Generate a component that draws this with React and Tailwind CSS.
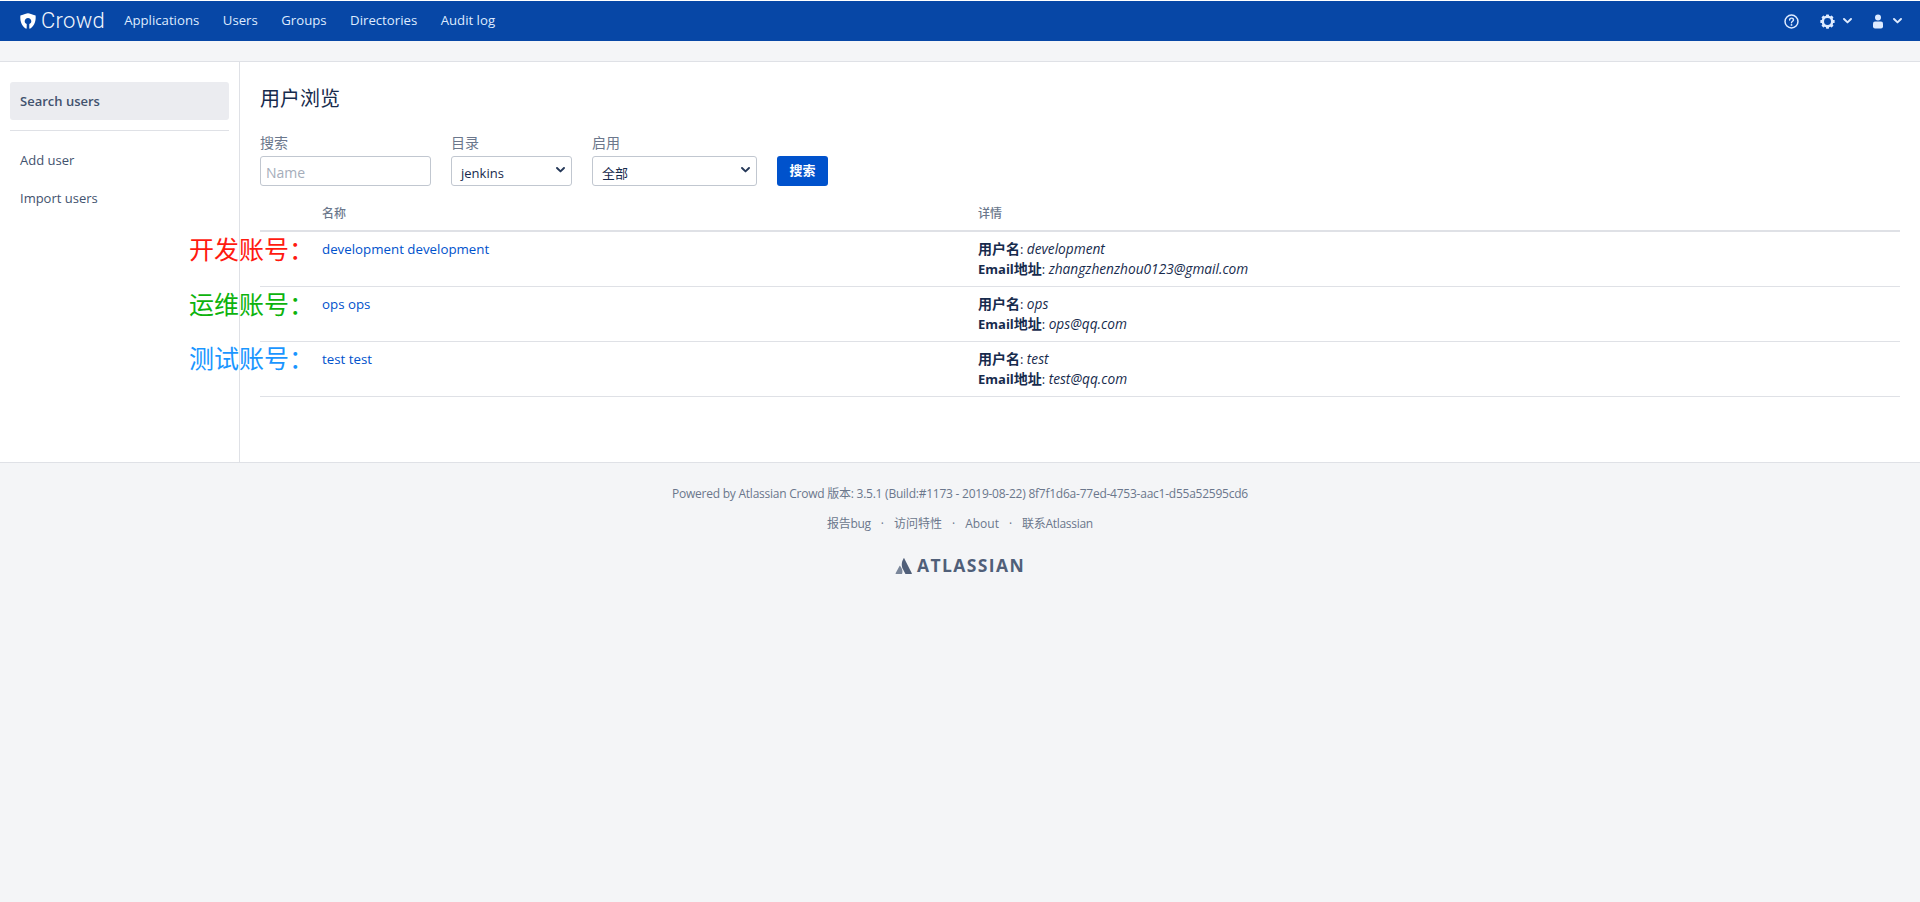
import React from "react";

function Shield() {
  return (
    <svg width="18" height="18" viewBox="0 0 18 18" className="shrink-0">
      <path fillRule="evenodd" fill="#fff" d="M9 1.2 C7.6 1.2 5 2.6 1.4 3.6 C0.9 8 2 13.4 6.6 16.6 C7.4 17 7.7 16.6 7.7 16 L7.7 12 C6.5 11.6 5.7 10.4 5.7 9.2 C5.7 7.4 7.2 6 9 6 C10.8 6 12.3 7.4 12.3 9.2 C12.3 10.4 11.5 11.6 10.3 12 L10.3 16 C10.3 16.6 10.6 17 11.4 16.6 C16 13.4 17.1 8 16.6 3.6 C13 2.6 10.4 1.2 9 1.2 Z" />
    </svg>
  );
}

function Chevron({ className = "" }) {
  return (
    <svg width="9" height="6" viewBox="0 0 9 6" className={className}>
      <path d="M1 1 L4.5 4.4 L8 1" fill="none" stroke="currentColor" strokeWidth="1.9" strokeLinecap="round" strokeLinejoin="round" />
    </svg>
  );
}

function Help() {
  return (
    <svg width="15" height="15" viewBox="0 0 16 16" className="text-[#deebff]">
      <circle cx="8" cy="8" r="6.9" fill="none" stroke="currentColor" strokeWidth="1.6" />
      <path d="M6 6.4 C6 5.2 6.9 4.4 8 4.4 C9.2 4.4 10.1 5.2 10.1 6.3 C10.1 7.7 8 7.7 8 9.3" fill="none" stroke="currentColor" strokeWidth="1.5" strokeLinecap="round" />
      <circle cx="8" cy="11.6" r="1" fill="currentColor" />
    </svg>
  );
}

function Gear() {
  return (
    <svg width="15" height="15" viewBox="0 0 16 16" className="text-[#deebff]">
      <circle cx="8" cy="8" r="5" fill="none" stroke="currentColor" strokeWidth="2.6" />
      <g fill="currentColor">
        <rect x="6.4" y="0.4" width="3.2" height="2.4" rx="0.6" />
        <rect x="6.4" y="13.2" width="3.2" height="2.4" rx="0.6" />
        <rect x="0.4" y="6.4" width="2.4" height="3.2" rx="0.6" />
        <rect x="13.2" y="6.4" width="2.4" height="3.2" rx="0.6" />
        <rect x="6.4" y="0.4" width="3.2" height="2.4" rx="0.6" transform="rotate(45 8 8)" />
        <rect x="6.4" y="13.2" width="3.2" height="2.4" rx="0.6" transform="rotate(45 8 8)" />
        <rect x="0.4" y="6.4" width="2.4" height="3.2" rx="0.6" transform="rotate(45 8 8)" />
        <rect x="13.2" y="6.4" width="2.4" height="3.2" rx="0.6" transform="rotate(45 8 8)" />
      </g>
    </svg>
  );
}

function Person() {
  return (
    <svg width="10" height="15" viewBox="0 0 10 15" className="text-[#deebff]">
      <circle cx="5" cy="3.4" r="3" fill="currentColor" />
      <rect x="0" y="7.4" width="10" height="7.2" rx="2" fill="currentColor" />
    </svg>
  );
}

function Select({ value, width }) {
  return (
    <div className={`${width} h-[30px] border border-[#c1c7d0] rounded-[3px] bg-white relative flex items-center pl-[9px] pt-[5px] text-[13px] text-[#172b4d]`}>
      {value}
      <Chevron className="absolute right-[6px] top-[10px] text-[#253858]" />
    </div>
  );
}

const users = [
  { name: "development development", user: "development", email: "zhangzhenzhou0123@gmail.com" },
  { name: "ops ops", user: "ops", email: "ops@qq.com" },
  { name: "test test", user: "test", email: "test@qq.com" },
];

const notes = [
  { text: "开发账号：", color: "text-[#ff1a10]", top: "top-[232px]" },
  { text: "运维账号：", color: "text-[#0db30d]", top: "top-[287px]" },
  { text: "测试账号：", color: "text-[#1a96ff]", top: "top-[341px]" },
];

export default function App() {
  return (
    <div className="relative min-h-[902px] bg-[#f4f5f7] font-['Open_Sans','Noto_Sans_CJK_SC',sans-serif] text-[13px] text-[#172b4d]">
      <div className="h-px bg-white" />
      <header className="h-10 bg-[#0747a6] flex items-center text-white">
        <div className="flex items-center pl-[19px]">
          <Shield />
          <span className="ml-[4px] text-[22px] font-['Roboto',sans-serif] font-light tracking-[0.3px] leading-none text-[#f2f6fc]">Crowd</span>
        </div>
        <nav className="flex items-center ml-[19px] gap-[23.5px] text-[13.2px] text-[#deebff]">
          <span>Applications</span>
          <span>Users</span>
          <span>Groups</span>
          <span>Directories</span>
          <span>Audit log</span>
        </nav>
        <div className="ml-auto flex items-center pr-[18px]">
          <Help />
          <div className="ml-[21px] flex items-center gap-[8px] text-[#deebff]">
            <Gear />
            <Chevron />
          </div>
          <div className="ml-[21px] flex items-center gap-[10px] text-[#deebff]">
            <Person />
            <Chevron />
          </div>
        </div>
      </header>
      <div className="h-5" />
      <main className="flex h-[402px] bg-white border-y border-[#dfe1e6]">
        <aside className="w-[240px] shrink-0 border-r border-[#dfe1e6] px-[10px] pt-5">
          <div className="h-[38px] rounded-[3px] bg-[#ebecf0] flex items-center px-[10px] pt-[2px] font-semibold text-[#42526e]">Search users</div>
          <div className="h-px bg-[#dfe1e6] mt-[10px]" />
          <div className="h-[38px] mt-[10px] flex items-center px-[10px] pt-[2px] text-[#42526e]">Add user</div>
          <div className="h-[38px] flex items-center px-[10px] pt-[2px] text-[#42526e]">Import users</div>
        </aside>
        <section className="flex-1 pl-5 pr-5 pt-[19px]">
          <h1 className="text-[20px] leading-[36px] font-normal text-[#172b4d]">用户浏览</h1>
          <div className="flex items-end mt-[16px]">
            <div className="w-[171px]">
              <div className="text-[14px] leading-[20px] text-[#6b778c] mb-[3px]">搜索</div>
              <div className="h-[30px] border border-[#c1c7d0] rounded-[3px] flex items-center pl-[5px] pt-[2px] text-[#a5adba] text-[14px]">Name</div>
            </div>
            <div className="ml-5">
              <div className="text-[14px] leading-[20px] text-[#6b778c] mb-[3px]">目录</div>
              <Select value="jenkins" width="w-[121px]" />
            </div>
            <div className="ml-5">
              <div className="text-[14px] leading-[20px] text-[#6b778c] mb-[3px]">启用</div>
              <Select value="全部" width="w-[165px]" />
            </div>
            <div className="ml-5 h-[30px] w-[51px] rounded-[3px] bg-[#0052cc] text-white font-bold flex items-center justify-center">搜索</div>
          </div>
          <div className="mt-[16px] grid grid-cols-[718px_1fr] h-[30px] border-b-2 border-[#dfe1e6] text-[12px] font-medium text-[#6b778c] leading-[24px]">
            <div className="pl-[62px]">名称</div>
            <div>详情</div>
          </div>
          {users.map((u) => (
            <div key={u.user} className="grid grid-cols-[718px_1fr] h-[55px] border-b border-[#dfe1e6] pt-[7px] leading-[20px]">
              <div className="pl-[62px] text-[#0052cc] text-[13.3px]">{u.name}</div>
              <div>
                <div><strong className="font-bold text-[14px]">用户名</strong>: <em className="text-[13.7px]">{u.user}</em></div>
                <div><strong className="font-bold">Email<span className="text-[14px]">地址</span></strong>: <em className="text-[13.7px]">{u.email}</em></div>
              </div>
            </div>
          ))}
        </section>
      </main>
      <footer className="flex flex-col items-center text-[12px] text-[#6b778c]">
        <p className="mt-[21px] leading-[20px] tracking-[-0.24px]">Powered by Atlassian Crowd 版本: 3.5.1 (Build:#1173 - 2019-08-22) 8f7f1d6a-77ed-4753-aac1-d55a52595cd6</p>
        <p className="mt-[10px] leading-[20px] flex gap-[10px]">
          <span className="tracking-[-0.3px]">报告bug</span><span>·</span><span>访问特性</span><span>·</span><span>About</span><span>·</span><span className="tracking-[-0.3px]">联系Atlassian</span>
        </p>
        <div className="mt-[23px] flex items-center gap-[4px] text-[#505f79]">
          <svg width="18" height="16" viewBox="0 0 18 16">
            <path fill="#7a869a" d="M5.2 8 C5 7.7 4.7 7.7 4.5 8.1 L0.6 15.2 C0.4 15.6 0.6 16 1 16 H6.6 C6.8 16 7 15.9 7.1 15.7 C8 13.6 7.3 10.6 5.2 8 Z" />
            <path fill="#505f79" d="M8.6 0.4 C6.2 4.1 6.4 8.2 8 11.3 L10.3 15.7 C10.4 15.9 10.6 16 10.8 16 H16.4 C16.8 16 17 15.6 16.8 15.2 L9.3 0.4 C9.1 0 8.8 0 8.6 0.4 Z" />
          </svg>
          <span className="font-bold text-[17.5px] leading-none tracking-[1.4px]">ATLASSIAN</span>
        </div>
      </footer>
      {notes.map((n) => (
        <div key={n.text} className={`absolute left-[189px] ${n.top} ${n.color} text-[25px] leading-[32px] font-['Noto_Sans_CJK_SC',sans-serif] font-normal whitespace-nowrap`}>{n.text}</div>
      ))}
    </div>
  );
}
